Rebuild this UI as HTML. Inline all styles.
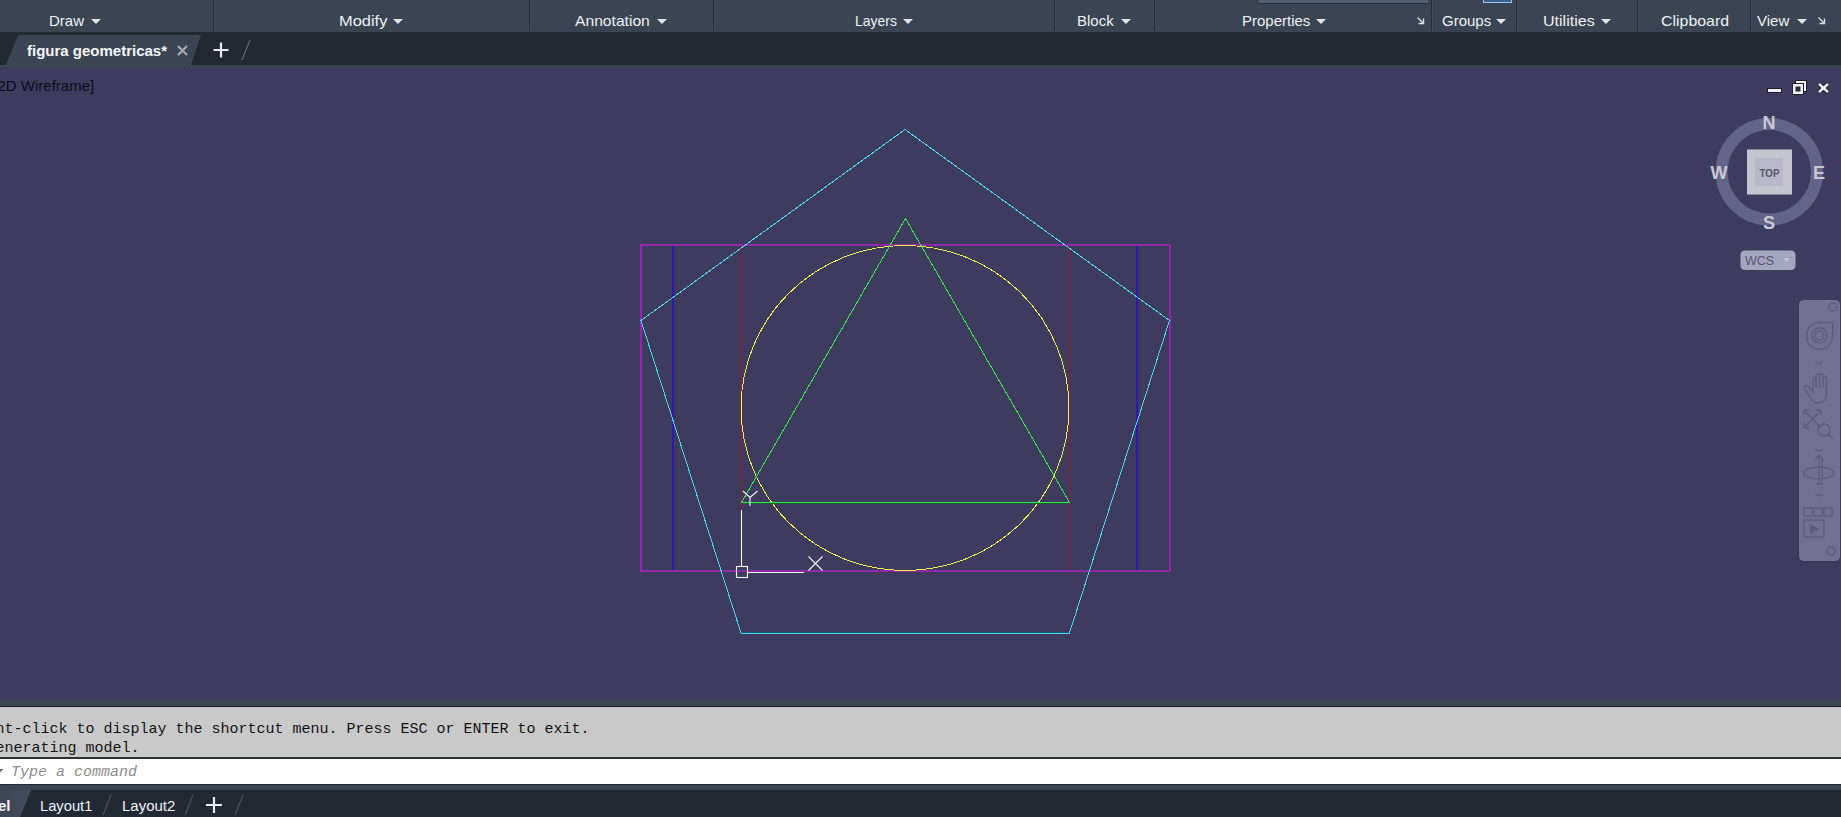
<!DOCTYPE html>
<html><head><meta charset="utf-8">
<style>
*{margin:0;padding:0;box-sizing:border-box}
html,body{width:1841px;height:817px;overflow:hidden;background:#3d3c5f;font-family:"Liberation Sans",sans-serif}
.a{position:absolute}
#ribbon{left:0;top:0;width:1841px;height:32px;background:#3b4453}
.sep{position:absolute;top:0;width:1px;height:31px;background:#272d37}
.sep::after{content:"";position:absolute;left:1px;top:0;width:1px;height:31px;background:#414a59}
.lbl{position:absolute;top:12px;font-size:15px;line-height:17px;color:#eef0f4;white-space:nowrap;transform-origin:0 0}
.arr{position:absolute;top:19px;width:0;height:0;border-left:5px solid transparent;border-right:5px solid transparent;border-top:5px solid #e2e4ea}
#tabbar{left:0;top:32px;width:1841px;height:33px;background:#222933}
#strip1{left:0;top:65px;width:1841px;height:3px;background:#3b4453}
#vp{left:0;top:68px;width:1841px;height:632px;background:#3d3c5f}
#strip2{left:0;top:700px;width:1841px;height:6px;background:#3b4453}
#cmd{left:0;top:706px;width:1841px;height:51px;background:#c9c9c9;border-top:1px solid #1f242c}
#cmdhi{left:0;top:707px;width:1841px;height:1px;background:#b9bccb}
#cmdline{left:0;top:757px;width:1841px;height:2px;background:#2b2f36}
#input{left:0;top:759px;width:1841px;height:25px;background:#ffffff}
#inbot{left:0;top:784px;width:1841px;height:1px;background:#262b33}
#strip3{left:0;top:785px;width:1841px;height:5px;background:#3b4453}
#bottom{left:0;top:790px;width:1841px;height:27px;background:#222933}
.mono{position:absolute;font-family:"Liberation Mono",monospace;font-size:15px;line-height:17px;color:#141414;white-space:pre}
.ltab{position:absolute;top:797px;font-size:15px;line-height:17px;color:#eef0f4;white-space:nowrap;transform-origin:0 0}
</style></head><body>
<div id="ribbon" class="a"></div>
<div class="sep" style="left:213px"></div>
<div class="sep" style="left:529px"></div>
<div class="sep" style="left:713px"></div>
<div class="sep" style="left:1054px"></div>
<div class="sep" style="left:1154px"></div>
<div class="sep" style="left:1431px"></div>
<div class="sep" style="left:1516px"></div>
<div class="sep" style="left:1637px"></div>
<div class="sep" style="left:1750px"></div>
<!-- top partial controls -->
<div class="a" style="left:1257px;top:0;width:171px;height:4px;background:#525d6f;border-bottom:1px solid #26303e;border-left:1px solid #26303e"></div>
<div class="a" style="left:1483px;top:0;width:29px;height:3px;background:#3d5f86;border:1px solid #9cc3ea;border-top:none"></div>

<div class="lbl" style="left:49px">Draw</div><div class="arr" style="left:91px"></div>
<div class="lbl" style="left:339px;transform:scaleX(1.095)">Modify</div><div class="arr" style="left:393px"></div>
<div class="lbl" style="left:575px;transform:scaleX(1.043)">Annotation</div><div class="arr" style="left:657px"></div>
<div class="lbl" style="left:855px;transform:scaleX(0.93)">Layers</div><div class="arr" style="left:903px"></div>
<div class="lbl" style="left:1077px">Block</div><div class="arr" style="left:1121px"></div>
<div class="lbl" style="left:1242px">Properties</div><div class="arr" style="left:1316px"></div>
<div class="lbl" style="left:1442px">Groups</div><div class="arr" style="left:1496px"></div>
<div class="lbl" style="left:1543px;transform:scaleX(1.07)">Utilities</div><div class="arr" style="left:1601px"></div>
<div class="lbl" style="left:1661px;transform:scaleX(1.06)">Clipboard</div>
<div class="lbl" style="left:1757px">View</div><div class="arr" style="left:1797px"></div>
<svg class="a" style="left:1416px;top:16px" width="10" height="9"><path d="M1.5 1.5 L7.5 7.5 M7.5 2.5 V7.5 H2.5" stroke="#d8dbe2" stroke-width="1.4" fill="none"/></svg>
<svg class="a" style="left:1817px;top:16px" width="10" height="9"><path d="M1.5 1.5 L7.5 7.5 M7.5 2.5 V7.5 H2.5" stroke="#d8dbe2" stroke-width="1.4" fill="none"/></svg>

<div id="tabbar" class="a"></div>
<div id="strip1" class="a"></div>
<svg class="a" style="left:0;top:32px" width="260" height="36">
<polygon points="18,3 201,3 191,33 6,33" fill="#3b4453"/>
<path d="M178 14 L187 23 M187 14 L178 23" stroke="#a3a8b2" stroke-width="2.3" />
<path d="M221 10.5 V25.5 M213.5 18 H228.5" stroke="#e8eaee" stroke-width="2.2"/>
<path d="M250 8 L242 28" stroke="#5d6573" stroke-width="1.2"/>
</svg>
<div class="a" style="left:27px;top:42px;font-size:15px;line-height:17px;font-weight:bold;color:#f4f6f8;white-space:nowrap">figura geometricas*</div>

<div id="vp" class="a"></div>
<div class="a" style="left:-2.5px;top:77px;font-size:15px;line-height:17px;color:#0c0c1c;white-space:nowrap">2D Wireframe]</div>

<!-- window controls -->
<svg class="a" style="left:1760px;top:75px" width="80" height="25">
<rect x="7.5" y="13.5" width="14" height="4" fill="#f0f0f4" stroke="#1c1b30" stroke-width="1"/>
<rect x="35.5" y="5.5" width="11" height="11" fill="#f0f0f4" stroke="#1c1b30" stroke-width="1"/>
<rect x="32.5" y="8.5" width="11" height="11" fill="#f0f0f4" stroke="#1c1b30" stroke-width="1"/>
<rect x="35.5" y="11.5" width="5" height="5" fill="#2a2940"/>
<path d="M59 9 L68 17 M68 9 L59 17" stroke="#1c1b30" stroke-width="4.5"/>
<path d="M59 9 L68 17 M68 9 L59 17" stroke="#f0f0f4" stroke-width="2.6"/>
</svg>

<!-- drawing -->
<svg class="a" style="left:0;top:0" width="1841" height="817">
<g fill="none" stroke-width="2" shape-rendering="crispEdges">
<line x1="741" y1="244" x2="741" y2="510" stroke="#6a2a4a"/>
<line x1="1069" y1="244" x2="1069" y2="572" stroke="#6a2a4a"/>
<line x1="673" y1="244" x2="673" y2="572" stroke="#2a1ca4"/>
<line x1="1137" y1="244" x2="1137" y2="572" stroke="#2a1ca4"/>
<rect x="641" y="245" width="529" height="326" stroke="#9028a8"/>
</g>
<g fill="none" stroke-width="1" shape-rendering="crispEdges">
<ellipse cx="905" cy="408" rx="164" ry="162.5" stroke="#eeec50"/>
<line x1="744" y1="503.5" x2="1068" y2="503.5" stroke="#14642c"/>
<line x1="742" y1="632.5" x2="1069" y2="632.5" stroke="#0a5a72"/>
<polygon points="905.5,218.5 1069.5,502.5 741.5,502.5" stroke="#3ce050"/>
<polygon points="905,129.5 1169.5,320.5 1069.5,633 741,633 641,320.5" stroke="#52d4ec"/>
</g>
<g stroke="#f4f4f4" stroke-width="1.1" fill="none">
<line x1="741.5" y1="510" x2="741.5" y2="566"/>
<line x1="747" y1="572.5" x2="804" y2="572.5"/>
<rect x="736.5" y="566.5" width="11" height="11"/>
<path d="M808.5 556.5 L822.5 570.5 M822.5 556.5 L808.5 570.5"/>
<path d="M743 491 L750 497.5 L757.5 491 M750 497.5 V506"/>
</g>
</svg>

<!-- viewcube -->
<svg class="a" style="left:1700px;top:100px" width="141" height="180">
<circle cx="69.3" cy="71.8" r="47.7" fill="none" stroke="#64638a" stroke-width="12"/>
<rect x="47" y="49.5" width="45" height="45" fill="#c5c5d0"/>
<rect x="55" y="58" width="28" height="28" fill="#b7b9c9"/>
<text x="69.5" y="77" font-family="Liberation Sans" font-weight="bold" font-size="11.5" fill="#55566e" text-anchor="middle" transform="translate(69.5 0) scale(0.85 1) translate(-69.5 0)">TOP</text>
<g font-family="Liberation Sans" font-weight="bold" font-size="18" fill="#c9c9d5" text-anchor="middle">
<text x="69" y="29">N</text>
<text x="69" y="129">S</text>
<text x="19" y="79">W</text>
<text x="119" y="79">E</text>
</g>
<rect x="40" y="150" width="56" height="20.5" rx="5" fill="#a4a5c0" stroke="#34334e" stroke-width="0.8"/>
<text x="45" y="164.5" font-family="Liberation Sans" font-size="12" fill="#55566c" textLength="29" lengthAdjust="spacingAndGlyphs">WCS</text>
<path d="M81 157.5 H92" stroke="#9a9bb6" stroke-width="1"/>
<path d="M83 158 L90 158 L86.5 162 Z" fill="#c3c4d8"/>
</svg>

<!-- navbar -->
<svg class="a" style="left:1795px;top:298px" width="46" height="266">
<rect x="3.5" y="2.5" width="41" height="261" rx="4" fill="#35344f"/>
<rect x="4.5" y="2.5" width="40" height="260" rx="4" fill="#71708f" stroke="#7c7b9a" stroke-width="0.8"/>
<g fill="none" stroke="#5c5b7b" stroke-width="1.3">
<circle cx="38" cy="9" r="4"/>
<path d="M37.5 24.5 L37.5 38 C37.5 45.5 31.5 51.5 24.5 51.5 C17 51.5 11.5 45.5 11.5 38 C11.5 30.5 17 24.5 24.5 24.5 Z"/>
<circle cx="24.5" cy="37.5" r="7.5"/>
<circle cx="24.5" cy="37.5" r="4.5"/>
<path d="M20 64 L24 66 L28 64"/>
<path d="M13 88 L18 94 L18 82 C18 79.5 21 79.5 21 82 L21 90 L21 78 C21 75.5 24.5 75.5 24.5 78 L24.5 90 L24.5 77 C24.5 74.5 28 74.5 28 77 L28 90 L28 80 C28 77.5 31.5 77.5 31.5 80 L31.5 96 C31.5 102 28 105 23 105 C19 105 17 103 15 99 L10 91 C9 89 11 87 13 88 Z"/>
<path d="M9 112 L26 130 M26 112 L9 130 M9 112 v5 M9 112 h5 M26 112 h-5 M26 112 v5 M9 130 v-5 M9 130 h5"/>
<circle cx="29" cy="132" r="6"/>
<path d="M33 136 L38 141"/>
<path d="M20 151 L24 153 L28 151"/>
<path d="M24 158 L24 186 M20 162 L24 157 L28 162 M21 186 H27 V160"/>
<ellipse cx="24" cy="175" rx="15" ry="6"/>
<path d="M20 196 L24 198 L28 196"/>
<rect x="9" y="210" width="8" height="8"/><rect x="19" y="210" width="8" height="8"/><rect x="29" y="210" width="8" height="8"/>
<rect x="9" y="222" width="20" height="17"/>
<circle cx="36" cy="253" r="4"/>
</g>
<path d="M15 226 L24 231 L15 236 Z" fill="#5c5b7b"/>
</svg>

<div id="strip2" class="a"></div>
<div id="cmd" class="a"></div>
<div id="cmdhi" class="a"></div>
<div class="mono" style="left:-4.5px;top:721px">nt-click to display the shortcut menu. Press ESC or ENTER to exit.</div>
<div class="mono" style="left:-4.5px;top:740px">enerating model.</div>
<div id="cmdline" class="a"></div>
<div id="input" class="a"></div>
<svg class="a" style="left:0;top:765px" width="6" height="10"><path d="M0 4 L3.5 4 L0 7.5 Z" fill="#666"/></svg>
<div class="mono" style="left:11px;top:764px;font-style:italic;color:#8c8c8c">Type a command</div>
<div id="inbot" class="a"></div>
<div id="strip3" class="a"></div>
<div id="bottom" class="a"></div>
<svg class="a" style="left:0;top:790px" width="260" height="27">
<defs><linearGradient id="mg" x1="0" x2="1" y1="0" y2="0"><stop offset="0" stop-color="#3b4453"/><stop offset="1" stop-color="#444d5c"/></linearGradient></defs>
<polygon points="-5,0 31,0 20,27 -5,27" fill="url(#mg)"/>
<path d="M111 5 L103 25 M193 5 L185 25 M243 5 L235 25" stroke="#4a5261" stroke-width="1.2"/>
<path d="M214 7 V23 M206 15 H222" stroke="#e8eaee" stroke-width="2.2"/>
</svg>
<div class="ltab" style="left:-2px;font-weight:bold">el</div>
<div class="ltab" style="left:40px;transform:scaleX(0.98)">Layout1</div>
<div class="ltab" style="left:122px">Layout2</div>
</body></html>
